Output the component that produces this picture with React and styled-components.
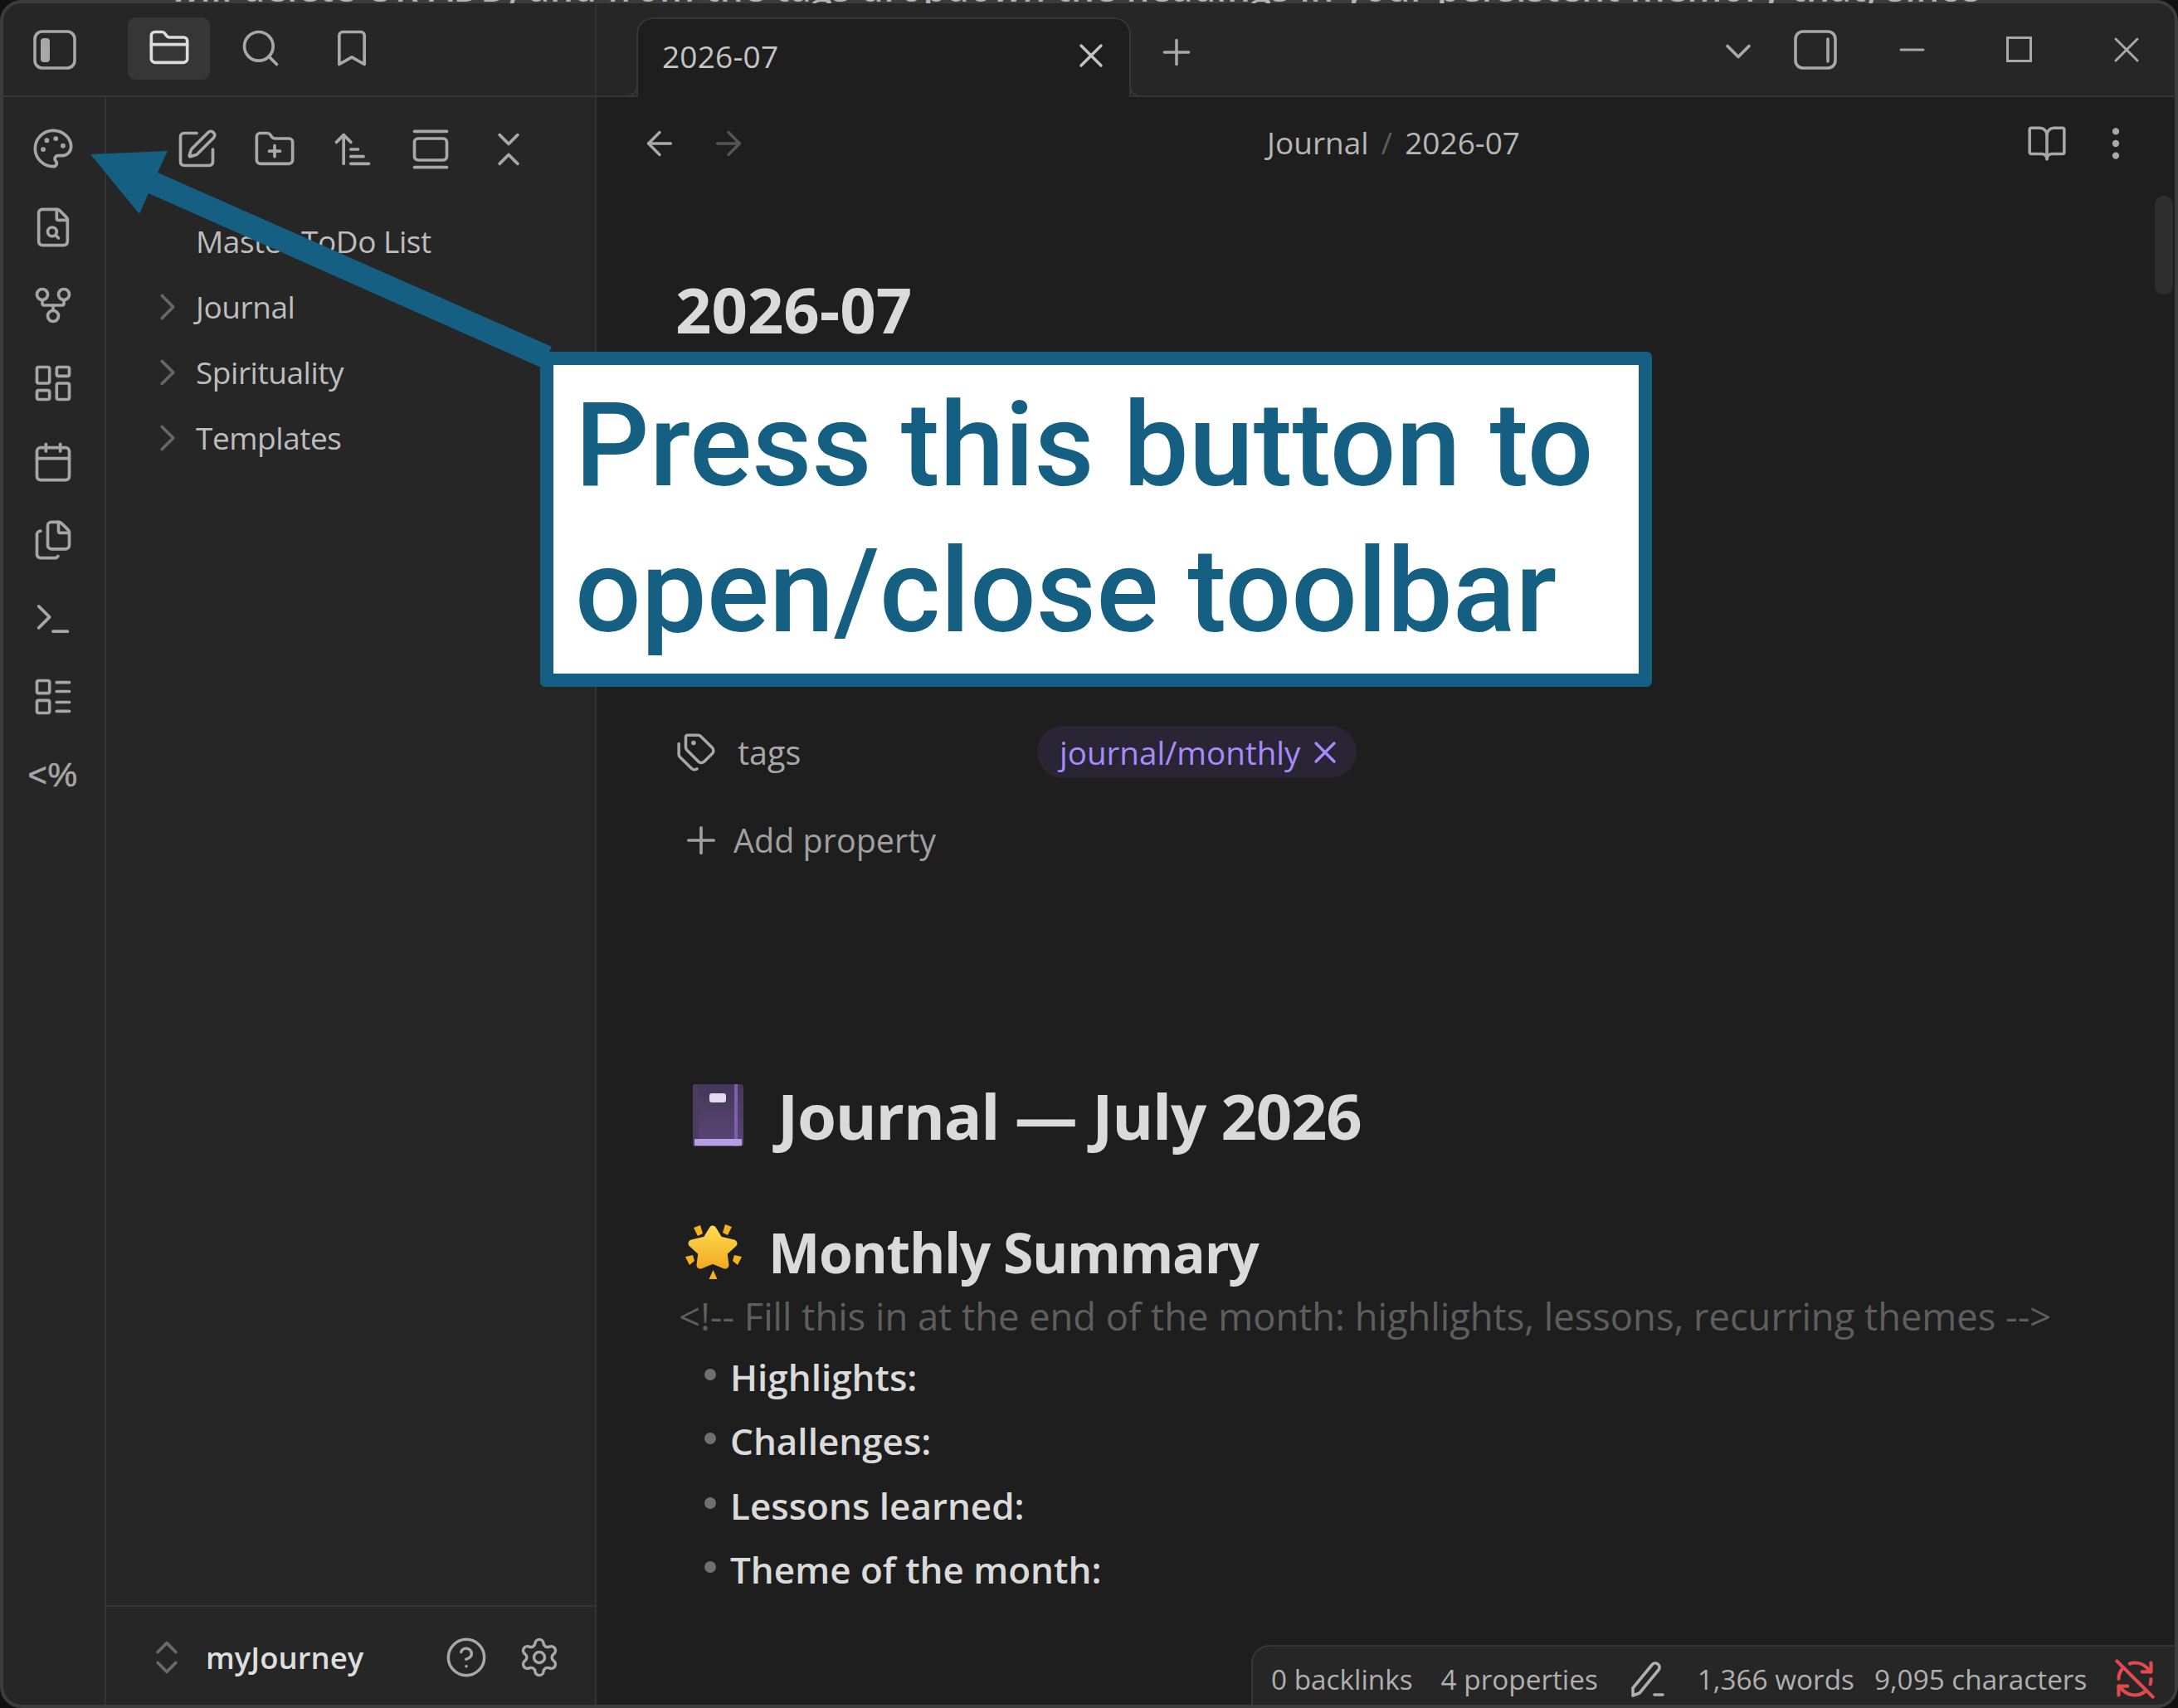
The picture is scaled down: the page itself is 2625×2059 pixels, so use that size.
import React from "react";
import styled, { createGlobalStyle } from "styled-components";
import {
  ArrowLeft,
  ArrowRight,
  ArrowUpNarrowWide,
  BookOpen,
  Bookmark,
  Calendar,
  ChevronDown,
  ChevronRight,
  ChevronsDownUp,
  ChevronsUpDown,
  CircleHelp,
  EllipsisVertical,
  FileSearch,
  Files,
  FolderClosed,
  FolderPlus,
  GalleryVertical,
  GitFork,
  LayoutDashboard,
  LayoutList,
  Palette,
  Plus,
  RefreshCwOff,
  Search,
  Settings,
  SquarePen,
  Tags,
  Terminal,
  X,
} from "lucide-react";

const BLUE = "#156082";
const UI_FONT = `"Open Sans", "Noto Sans", sans-serif`;

const Global = createGlobalStyle`
  html, body {
    margin: 0;
    padding: 0;
    background: #111;
  }
  body {
    font-family: ${UI_FONT};
    color: #dadada;
  }
`;

const Page = styled.div`
  position: relative;
  width: 2625px;
  height: 2059px;
  overflow: hidden;
`;

const CutOffLine = styled.div`
  position: absolute;
  top: 0;
  left: 205px;
  z-index: 3;
  width: 2190px;
  height: 4px;
  overflow: hidden;
  white-space: nowrap;
  font: 600 44px/44px "Open Sans", sans-serif;
  letter-spacing: 0.6px;
  color: #b4b4b4;
  span {
    display: block;
    margin-top: -37px;
  }
`;

const Window = styled.div`
  box-sizing: border-box;
  width: 100%;
  height: 100%;
  display: flex;
  flex-direction: column;
  border: 4px solid #3c3c3c;
  border-radius: 26px;
  overflow: hidden;
  background: #262626;
`;

const TitleBar = styled.div`
  flex: none;
  display: flex;
  height: 113px;
  border-bottom: 2px solid #363636;
  box-sizing: border-box;
  background: #262626;
`;

const TitleLeft = styled.div`
  flex: none;
  box-sizing: border-box;
  width: 715px;
  display: flex;
  align-items: center;
  padding-left: 36px;
  border-right: 2px solid #333;
  color: #a8a8a8;
`;

const SideTabs = styled.div`
  display: flex;
  gap: 11px;
  margin-left: 62px;
  margin-bottom: 3px;
`;

const SideTab = styled.div`
  width: 99px;
  height: 75px;
  display: flex;
  align-items: center;
  justify-content: center;
  border-radius: 9px;
  background: ${(p) => (p.$active ? "#363636" : "transparent")};
  color: ${(p) => (p.$active ? "#dcdcdc" : "#a8a8a8")};
`;

const TabStrip = styled.div`
  flex: 1;
  display: flex;
  align-items: flex-end;
  padding-left: 48px;
  color: #a8a8a8;
`;

const Tab = styled.div`
  position: relative;
  box-sizing: border-box;
  width: 596px;
  height: 96px;
  margin-bottom: -2px;
  display: flex;
  align-items: center;
  justify-content: space-between;
  padding: 0 22px 6px 29px;
  background: #1e1e1e;
  border: 2px solid #363636;
  border-bottom: none;
  border-radius: 20px 20px 0 0;
  color: #c4c4c4;
  font-size: 37px;
  letter-spacing: 0.2px;
  &::before,
  &::after {
    content: "";
    position: absolute;
    bottom: 0;
    width: 14px;
    height: 14px;
    border-bottom: 2px solid #363636;
    background: #262626;
  }
  &::before {
    left: -16px;
    border-right: 2px solid #363636;
    border-bottom-right-radius: 14px;
  }
  &::after {
    right: -16px;
    border-left: 2px solid #363636;
    border-bottom-left-radius: 14px;
  }
`;

const NewTab = styled.div`
  display: flex;
  align-self: center;
  margin-left: 30px;
  margin-top: 6px;
`;

const WindowControls = styled.div`
  margin-left: auto;
  align-self: center;
  display: flex;
  align-items: center;
`;

const ListButton = styled.div`
  display: flex;
  margin-right: 41px;
  margin-top: 4px;
`;

const PanelButton = styled.div`
  display: flex;
  margin-right: 20px;
`;

const WinButton = styled.div`
  box-sizing: border-box;
  width: 129px;
  padding-left: 12px;
  display: flex;
  justify-content: center;
`;

const Body = styled.div`
  flex: 1;
  min-height: 0;
  display: flex;
`;

const Ribbon = styled.div`
  flex: none;
  box-sizing: border-box;
  width: 124px;
  padding: 15px 3px 0 0;
  display: flex;
  flex-direction: column;
  align-items: center;
  border-right: 2px solid #333;
  color: #a6a6a6;
`;

const RibbonSlot = styled.div`
  flex: none;
  height: 94.4px;
  display: flex;
  align-items: center;
  justify-content: center;
`;

const TemplaterGlyph = styled.span`
  font: 400 40px/1 "Liberation Sans", sans-serif;
  letter-spacing: 0.5px;
  color: #a6a6a6;
  -webkit-text-stroke: 0.6px #a6a6a6;
`;

const Sidebar = styled.div`
  flex: none;
  box-sizing: border-box;
  width: 591px;
  display: flex;
  flex-direction: column;
  border-right: 2px solid #333;
`;

const SideNav = styled.div`
  flex: none;
  height: 126px;
  display: flex;
  align-items: center;
  padding-left: 62px;
  color: #a8a8a8;
`;

const SideNavSlot = styled.div`
  width: 94px;
  display: flex;
  justify-content: center;
`;

const Tree = styled.div`
  flex: 1;
  padding: 8px 0 0 47px;
`;

const TreeRow = styled.div`
  height: 79px;
  display: flex;
  align-items: center;
  gap: 7px;
  font-size: 37px;
  color: #bdbdbd;
  letter-spacing: -0.45px;
`;

const TreeChevron = styled.div`
  width: 54px;
  display: flex;
  color: #666;
`;

const Vault = styled.div`
  flex: none;
  height: 120px;
  box-sizing: border-box;
  display: flex;
  align-items: center;
  border-top: 2px solid #333;
  padding: 4px 5px 0 47px;
`;

const VaultSwitch = styled.div`
  display: flex;
  color: #6a6a6a;
`;

const VaultName = styled.div`
  flex: 1;
  margin-left: 21px;
  font-size: 36.5px;
  font-weight: 600;
  color: #dedede;
`;

const VaultAction = styled.div`
  display: flex;
  margin-right: 36px;
  color: #a8a8a8;
`;

const Main = styled.div`
  position: relative;
  flex: 1;
  min-width: 0;
  display: flex;
  flex-direction: column;
  background: #1e1e1e;
  overflow: hidden;
`;

const ViewHeader = styled.div`
  flex: none;
  box-sizing: border-box;
  height: 108px;
  display: flex;
  align-items: center;
  position: relative;
  padding: 3px 46px 0 53px;
  color: #a8a8a8;
`;

const NavArrow = styled.div`
  display: flex;
  margin-right: 37px;
  color: ${(p) => (p.$disabled ? "#555" : "#a8a8a8")};
`;

const Breadcrumb = styled.div`
  position: absolute;
  left: 808px;
  top: 0;
  height: 100%;
  display: flex;
  align-items: center;
  gap: 15px;
  font-size: 37px;
  color: #b6b6b6;
  i {
    font-style: normal;
    color: #5c5c5c;
  }
`;

const ViewActions = styled.div`
  margin-left: auto;
  display: flex;
  align-items: center;
  gap: 33px;
`;

const Note = styled.div`
  flex: 1;
  padding-left: 95px;
  color: #dadada;
`;

const NoteTitle = styled.div`
  margin-top: 98px;
  font-size: 76px;
  line-height: 100px;
  font-weight: 700;
  letter-spacing: 0;
  color: #dadada;
`;

const Properties = styled.div`
  margin-top: 116px;
  display: flex;
  flex-direction: column;
`;

const PropRow = styled.div`
  height: 105px;
  display: flex;
  align-items: center;
`;

const PropKey = styled.div`
  width: 436px;
  display: flex;
  align-items: center;
  gap: 25px;
  font-size: 39.5px;
  color: #a8a8a8;
  svg {
    flex: none;
  }
`;

const PropValue = styled.div`
  font-size: 37px;
  color: #c4c4c4;
`;

const TagPill = styled.div`
  height: 63px;
  box-sizing: border-box;
  display: inline-flex;
  align-items: center;
  gap: 8px;
  padding: 0 16px 0 27px;
  border-radius: 32px;
  background: #2a2534;
  color: #a88bfa;
  font-size: 38.6px;
`;

const AddProperty = styled.div`
  height: 104px;
  box-sizing: border-box;
  padding-top: 3px;
  display: flex;
  align-items: center;
  gap: 13px;
  margin-left: 5px;
  font-size: 39.5px;
  color: #a0a0a0;
`;

const Heading = styled.div`
  display: flex;
  align-items: center;
  margin-top: ${(p) => p.$top}px;
  margin-left: ${(p) => p.$indent}px;
  gap: ${(p) => p.$gap}px;
  height: ${(p) => p.$height}px;
  font-size: ${(p) => p.$size}px;
  font-weight: 700;
  letter-spacing: ${(p) => p.$track}px;
  color: #dadada;
  white-space: nowrap;
`;

const Comment = styled.div`
  height: 66px;
  line-height: 66px;
  margin-left: 4px;
  font-size: 45.3px;
  white-space: nowrap;
  color: #5e5e5e;
`;

const BulletList = styled.ul`
  list-style: none;
  margin: 0;
  padding: 1px 0 0;
`;

const Bullet = styled.li`
  height: 77.5px;
  display: flex;
  align-items: center;
  padding-left: 35px;
  gap: 17px;
  font-size: 44px;
  font-weight: 600;
  letter-spacing: 0;
  color: #dadada;
  &::before {
    content: "";
    width: 14px;
    height: 14px;
    margin-top: -6px;
    border-radius: 50%;
    background: #6f6f6f;
  }
`;

const ScrollThumb = styled.div`
  position: absolute;
  top: 119px;
  right: 2px;
  width: 22px;
  height: 119px;
  border-radius: 11px;
  background: #2e2e2e;
`;

const StatusBar = styled.div`
  position: absolute;
  right: 0;
  bottom: 0;
  box-sizing: border-box;
  width: 1113px;
  height: 72px;
  display: flex;
  align-items: center;
  padding: 8px 0 0 22px;
  background: #262626;
  border: 2px solid #363636;
  border-width: 2px 0 0 2px;
  border-top-left-radius: 22px;
  font-size: 33.3px;
  color: #b0b0b0;
  white-space: nowrap;
`;

const StatusItem = styled.div`
  display: flex;
  margin-left: ${(p) => p.$gap || 0}px;
  color: ${(p) => p.$color || "inherit"};
`;

const Callout = styled.div`
  position: absolute;
  left: 651px;
  top: 424px;
  z-index: 2;
  box-sizing: border-box;
  width: 1340px;
  height: 404px;
  padding: 9px 0 0 26px;
  border: 16px solid ${BLUE};
  border-radius: 6px;
  background: #fff;
  color: ${BLUE};
  font: 500 140.5px/176px Roboto, "Liberation Sans", sans-serif;
  white-space: nowrap;
`;

const ArrowOverlay = styled.svg`
  position: absolute;
  left: 0;
  top: 0;
  z-index: 1;
`;

const line = { fill: "none", stroke: "currentColor", strokeLinecap: "round", strokeLinejoin: "round" };

const LeftPanelIcon = () => (
  <svg width="52" height="48" viewBox="0 0 52 48" {...line} strokeWidth="3.6">
    <rect x="2" y="2" width="48" height="44" rx="9" />
    <rect x="9" y="10" width="11" height="29" rx="4" fill="currentColor" stroke="none" />
  </svg>
);

const RightPanelIcon = () => (
  <svg width="52" height="48" viewBox="0 0 52 48" {...line} strokeWidth="3.6">
    <rect x="2" y="2" width="48" height="44" rx="9" />
    <path d="M41 11v27" />
  </svg>
);

const MinimizeIcon = () => (
  <svg width="31" height="6" viewBox="0 0 31 6" {...line} strokeWidth="3">
    <path d="M2 3h27" />
  </svg>
);

const MaximizeIcon = () => (
  <svg width="31" height="31" viewBox="0 0 31 31" fill="none" stroke="currentColor" strokeWidth="3">
    <rect x="1.5" y="1.5" width="28" height="28" />
  </svg>
);

const CloseIcon = () => (
  <svg width="30" height="30" viewBox="0 0 30 30" {...line} strokeWidth="3">
    <path d="M2 2l26 26M28 2L2 28" />
  </svg>
);

const EditModeIcon = () => (
  <svg width="42" height="44" viewBox="0 0 42 44" {...line} strokeWidth="3.6">
    <path d="M3 33L26 5a5 5 0 0 1 8 6L11 39l-8 3z" />
    <path d="M29 41h10" />
  </svg>
);

const BookEmoji = () => (
  <svg width="61" height="75" viewBox="0 0 61 75">
    <defs>
      <linearGradient id="bookBody" x1="0" y1="0" x2="0" y2="1">
        <stop offset="0" stopColor="#43375a" />
        <stop offset="1" stopColor="#5b4675" />
      </linearGradient>
    </defs>
    <rect x="0" y="0" width="61" height="75" rx="4" fill="url(#bookBody)" />
    <rect x="0" y="0" width="7" height="75" rx="3" fill="#4a3d5e" />
    <rect x="50" y="0" width="4" height="75" fill="#7d60ad" />
    <rect x="20" y="11" width="20" height="11" rx="3" fill="#e4dcee" />
    <rect x="2" y="66" width="57" height="8" rx="1" fill="#b99de3" />
  </svg>
);

const StarEmoji = () => (
  <svg width="68" height="68" viewBox="0 0 68 68">
    <defs>
      <linearGradient id="starBody" gradientUnits="userSpaceOnUse" x1="0" y1="0" x2="0" y2="56">
        <stop offset="0" stopColor="#ffdf55" />
        <stop offset="1" stopColor="#f0a81e" />
      </linearGradient>
    </defs>
    <path d="M10 5l8-3 3 10-6 3z" fill="#f5b21e" />
    <path d="M56 4l-8-3-3 10 6 3z" fill="#f5b21e" />
    <path d="M0 40l9-2 2 7-6 5z" fill="#f5b21e" />
    <path d="M68 40l-9-2-2 7 6 5z" fill="#f5b21e" />
    <path d="M33.500 56l5 11H28.500z" fill="#f5b21e" />
    <polygon
      points="33,7 41,20 58,24 46,35 48,50 33,44 18,50 20,35 8,24 25,20"
      fill="url(#starBody)"
      stroke="url(#starBody)"
      strokeWidth="9"
      strokeLinejoin="round"
    />
  </svg>
);

const ribbonIcons = [Palette, FileSearch, GitFork, LayoutDashboard, Calendar, Files, Terminal, LayoutList];
const sideTabs = [FolderClosed, Search, Bookmark];
const sideNav = [SquarePen, FolderPlus, ArrowUpNarrowWide, GalleryVertical, ChevronsDownUp];
const tree = [
  { name: "Master ToDo List" },
  { name: "Journal", folder: true },
  { name: "Spirituality", folder: true },
  { name: "Templates", folder: true },
];
const summary = ["Highlights:", "Challenges:", "Lessons learned:", "Theme of the month:"];
const hiddenProps = [
  { key: "created", value: "2026-07-01" },
  { key: "updated", value: "2026-07-31" },
  { key: "month", value: "2026-07" },
];

export default function App() {
  return (
    <Page>
      <Global />
      <Window>
        <TitleBar>
          <TitleLeft>
            <LeftPanelIcon />
            <SideTabs>
              {sideTabs.map((Icon, i) => (
                <SideTab key={i} $active={i === 0}>
                  <Icon size={52} strokeWidth={1.7} />
                </SideTab>
              ))}
            </SideTabs>
          </TitleLeft>
          <TabStrip>
            <Tab>
              2026-07
              <X size={48} strokeWidth={1.7} />
            </Tab>
            <NewTab>
              <Plus size={50} strokeWidth={1.7} />
            </NewTab>
            <WindowControls>
              <ListButton>
                <ChevronDown size={52} strokeWidth={1.7} />
              </ListButton>
              <PanelButton>
                <RightPanelIcon />
              </PanelButton>
              <WinButton>
                <MinimizeIcon />
              </WinButton>
              <WinButton>
                <MaximizeIcon />
              </WinButton>
              <WinButton>
                <CloseIcon />
              </WinButton>
            </WindowControls>
          </TabStrip>
        </TitleBar>
        <Body>
          <Ribbon>
            {ribbonIcons.map((Icon, i) => (
              <RibbonSlot key={i}>
                <Icon size={52} strokeWidth={1.7} />
              </RibbonSlot>
            ))}
            <RibbonSlot>
              <TemplaterGlyph>&lt;%</TemplaterGlyph>
            </RibbonSlot>
          </Ribbon>
          <Sidebar>
            <SideNav>
              {sideNav.map((Icon, i) => (
                <SideNavSlot key={i}>
                  <Icon size={52} strokeWidth={1.7} />
                </SideNavSlot>
              ))}
            </SideNav>
            <Tree>
              {tree.map((row) => (
                <TreeRow key={row.name}>
                  <TreeChevron>{row.folder && <ChevronRight size={54} strokeWidth={1.7} />}</TreeChevron>
                  {row.name}
                </TreeRow>
              ))}
            </Tree>
            <Vault>
              <VaultSwitch>
                <ChevronsUpDown size={52} strokeWidth={1.7} />
              </VaultSwitch>
              <VaultName>myJourney</VaultName>
              <VaultAction>
                <CircleHelp size={52} strokeWidth={1.6} />
              </VaultAction>
              <VaultAction>
                <Settings size={52} strokeWidth={1.6} />
              </VaultAction>
            </Vault>
          </Sidebar>
          <Main>
            <ViewHeader>
              <NavArrow>
                <ArrowLeft size={46} strokeWidth={1.8} />
              </NavArrow>
              <NavArrow $disabled>
                <ArrowRight size={46} strokeWidth={1.8} />
              </NavArrow>
              <Breadcrumb>
                Journal <i>/</i> 2026-07
              </Breadcrumb>
              <ViewActions>
                <BookOpen size={50} strokeWidth={1.7} />
                <EllipsisVertical size={50} strokeWidth={2} />
              </ViewActions>
            </ViewHeader>
            <Note>
              <NoteTitle>2026-07</NoteTitle>
              <Properties>
                {hiddenProps.map((prop) => (
                  <PropRow key={prop.key}>
                    <PropKey>
                      <Calendar size={54} strokeWidth={1.6} />
                      {prop.key}
                    </PropKey>
                    <PropValue>{prop.value}</PropValue>
                  </PropRow>
                ))}
                <PropRow>
                  <PropKey>
                    <Tags size={50} strokeWidth={1.7} />
                    tags
                  </PropKey>
                  <TagPill>
                    journal/monthly
                    <X size={44} strokeWidth={1.8} />
                  </TagPill>
                </PropRow>
              </Properties>
              <AddProperty>
                <Plus size={52} strokeWidth={1.7} />
                Add property
              </AddProperty>
              <Heading $top={231} $indent={21} $gap={41} $height={100} $size={76} $track={-1.2}>
                <BookEmoji />
                Journal — July 2026
              </Heading>
              <Heading $top={70} $indent={12} $gap={32} $height={90} $size={66} $track={-1.3}>
                <StarEmoji />
                Monthly Summary
              </Heading>
              <Comment>&lt;!-- Fill this in at the end of the month: highlights, lessons, recurring themes --&gt;</Comment>
              <BulletList>
                {summary.map((item) => (
                  <Bullet key={item}>{item}</Bullet>
                ))}
              </BulletList>
            </Note>
            <ScrollThumb />
            <StatusBar>
              <StatusItem>0 backlinks</StatusItem>
              <StatusItem $gap={34}>4 properties</StatusItem>
              <StatusItem $gap={39}>
                <EditModeIcon />
              </StatusItem>
              <StatusItem $gap={39}>1,366 words</StatusItem>
              <StatusItem $gap={24}>9,095 characters</StatusItem>
              <StatusItem $gap={32} $color="#e5484d">
                <RefreshCwOff size={52} strokeWidth={1.9} />
              </StatusItem>
            </StatusBar>
          </Main>
        </Body>
      </Window>
      <CutOffLine>
        <span>will delete OR ADD, and from the tags dropdown the headings in your persistent memory that, since the note will be</span>
      </CutOffLine>
      <ArrowOverlay width="2625" height="2059" viewBox="0 0 2625 2059">
        <polygon points="109,186 202,182 190,208 665,418 652,443 179,233 168,258" fill={BLUE} />
      </ArrowOverlay>
      <Callout>
        Press this button to
        <br />
        open/close toolbar
      </Callout>
    </Page>
  );
}
